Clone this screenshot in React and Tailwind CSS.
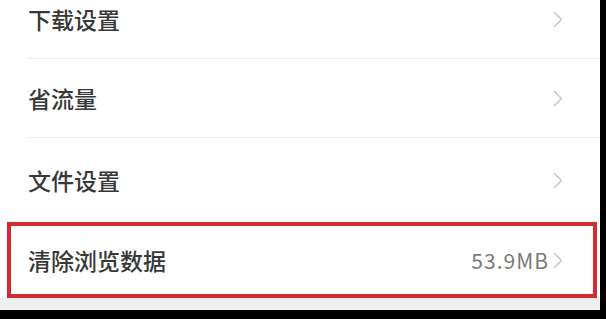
import React from 'react';

const Chevron = () => (
  <svg width="10" height="17" viewBox="0 0 10 17" fill="none" className="shrink-0">
    <polyline points="1.5,1.5 8.5,8.5 1.5,15.5" stroke="#c8c8c8" strokeWidth="1.6" strokeLinecap="round" strokeLinejoin="round" />
  </svg>
);

const rows = [
  { label: '下载设置', height: 'h-[78px]', divider: true },
  { label: '省流量', height: 'h-[79px]', divider: true },
  { label: '文件设置', height: 'h-[84px]', divider: false },
];

const App = () => {
  return (
    <div className="w-[606px] h-[319px] bg-black overflow-hidden" style={{ fontFamily: '"Noto Sans CJK SC", "Noto Sans", sans-serif' }}>
      <div className="w-[600px] h-[310px] bg-white overflow-hidden flex flex-col">
        <div className="-mt-[19px] flex flex-col">
          {rows.map((row) => (
            <div key={row.label} className={`${row.height} pl-[28px] flex`}>
              <div className={`flex-1 flex items-center justify-between pr-[37px] ${row.divider ? 'border-b border-[#eeeeee]' : ''}`}>
                <span className="text-[23px] font-medium text-[#383838] leading-none">{row.label}</span>
                <Chevron />
              </div>
            </div>
          ))}
        </div>

        <div className="mx-[7px] w-[590px] h-[76px] border-[4px] border-[#d42a32] flex items-center justify-between pl-[17px] pr-[30px] shrink-0">
          <span className="text-[23px] font-medium text-[#383838] leading-none">清除浏览数据</span>
          <div className="flex items-center gap-[4px]">
            <span className="text-[21px] text-[#7a7a7a] leading-none tracking-[1px]">53.9MB</span>
            <Chevron />
          </div>
        </div>

        <div className="flex-1 bg-[#efefef]" />
      </div>
    </div>
  );
};

export default App;
